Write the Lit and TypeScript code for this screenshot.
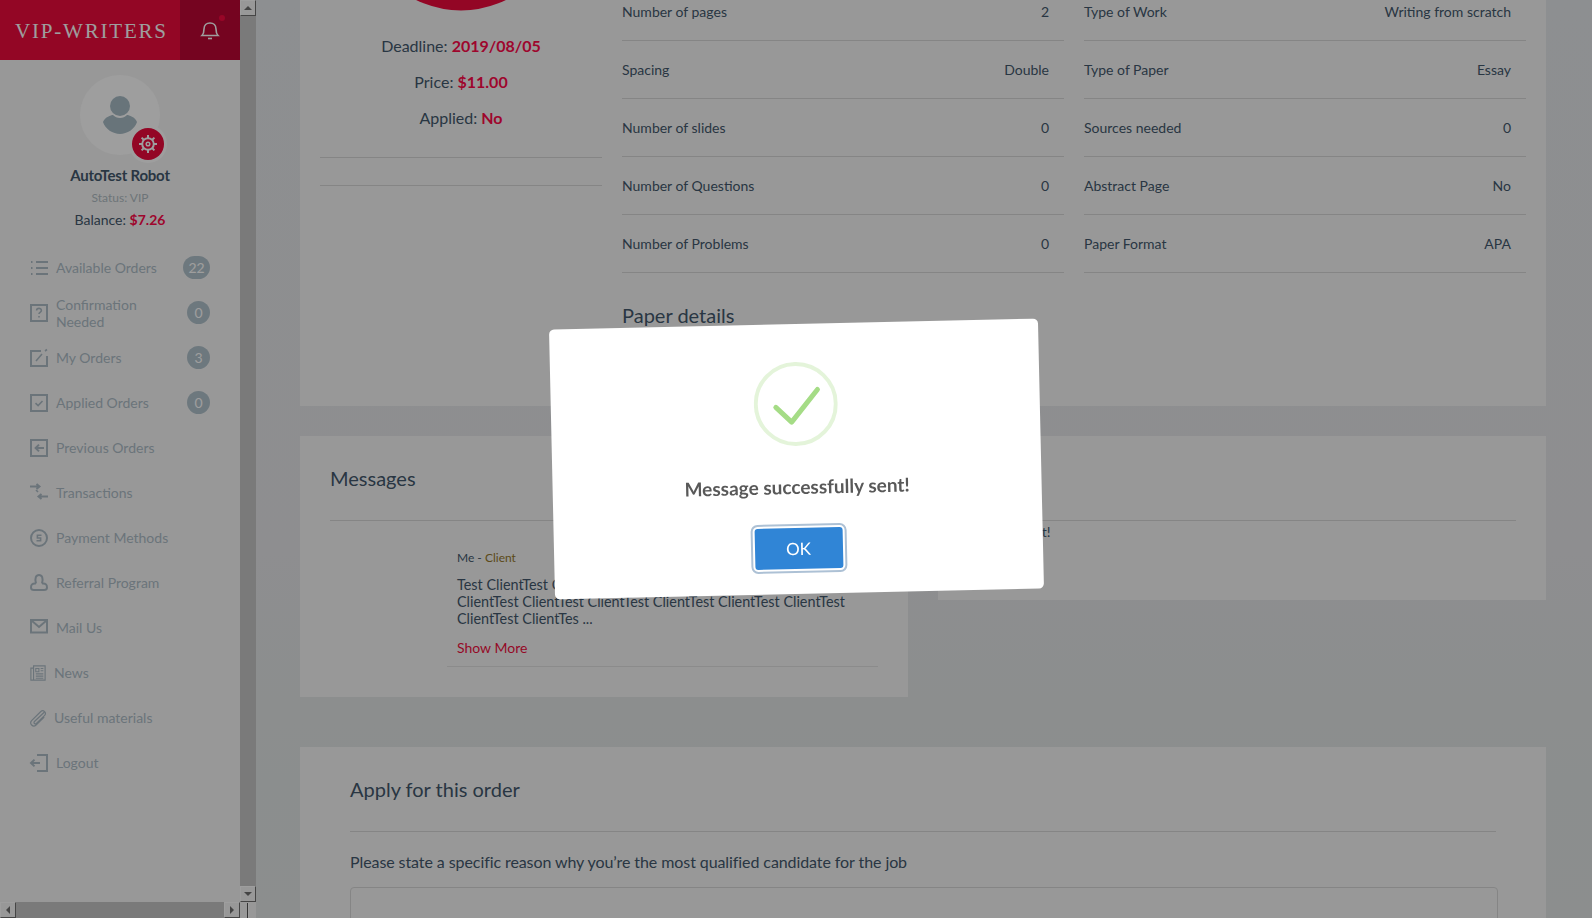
import { LitElement, html, css, svg } from "lit";
import { customElement } from "lit/decorators.js";

const icons: Record<string, unknown> = {
  list: svg`<path d="M6 3h12M6 9h12M6 15h12"/><path d="M1 3h1.500M1 9h1.500M1 15h1.500"/>`,
  question: svg`<rect x="1" y="1" width="16" height="16"/><path d="M6.600 6.600c0-3 4.800-3 4.800 0 0 1.800-2.400 1.800-2.400 3.400M9 12v1.600" stroke-width="1.600"/>`,
  edit: svg`<path d="M11 2H1v15h16V7"/><path d="M6 12l6-7M15 2l2-1.500" stroke-width="1.600"/>`,
  check: svg`<rect x="1" y="1" width="16" height="16"/><path d="M5.500 9.200l2.600 2.400 4.400-4.600" stroke-width="1.600"/>`,
  prev: svg`<rect x="1" y="1" width="16" height="16"/><path d="M14 9H6M9 5.600L5.600 9 9 12.400"/>`,
  swap: svg`<path d="M0 2.500h9M6.500 0l3 2.500-3 2.500"/><path d="M18 12.500H9M11.500 10l-3 2.500 3 2.500"/><path d="M6 6l2 2" stroke-width="1.600"/>`,
  dollar: svg`<circle cx="9" cy="9" r="8"/><path d="M11.500 6.200H7.400v2.800h3.200v2.800H6.500" stroke-width="1.600"/>`,
  referral: svg`<path d="M6 9.500C4.500 4 6 1 9 1s4.500 3 3 8.500"/><path d="M6 9.500C2 9 1 11 1 13.500 1 15.500 2 16 4 16h10c2 0 3-.5 3-2.500 0-2.500-1-4.500-5-4"/>`,
  mail: svg`<rect x="1" y="1" width="16" height="12.500"/><path d="M1.500 1.500L9 8l7.500-6.500"/>`,
  news: svg`<path d="M4 1h13v16H4zM4 3.500H1V17h3" stroke-width="1.300"/><path d="M6.500 4h3.500v3.500H6.500zM12 4h3M12 6.500h3M6.500 10h8.500M6.500 12.500h8.500M6.500 15h8.500" stroke-width="1.200"/>`,
  clip: svg`<path d="M16 2.500L5 13c-1.500 1.500 .8 3.500 2.200 2L16.500 6c2.800-2.800-1.500-7-4.300-4.300L1.800 12c-3.300 3.500 1.700 8 5 4.800L16 8" stroke-width="1.400"/>`,
  logout: svg`<path d="M7 1h10v16H7"/><path d="M10 9H1M4.500 5.600L1 9l3.500 3.400"/>`,
};

const navItems = [
  { label: "Available Orders", icon: "list", badge: "22" },
  { label: "Confirmation Needed", icon: "question", badge: "0" },
  { label: "My Orders", icon: "edit", badge: "3" },
  { label: "Applied Orders", icon: "check", badge: "0" },
  { label: "Previous Orders", icon: "prev" },
  { label: "Transactions", icon: "swap" },
  { label: "Payment Methods", icon: "dollar" },
  { label: "Referral Program", icon: "referral" },
  { label: "Mail Us", icon: "mail" },
  { label: "News", icon: "news", small: true },
  { label: "Useful materials", icon: "clip", small: true },
  { label: "Logout", icon: "logout" },
];

const detailsLeft = [
  ["Number of pages", "2"],
  ["Spacing", "Double"],
  ["Number of slides", "0"],
  ["Number of Questions", "0"],
  ["Number of Problems", "0"],
];

const detailsRight = [
  ["Type of Work", "Writing from scratch"],
  ["Type of Paper", "Essay"],
  ["Sources needed", "0"],
  ["Abstract Page", "No"],
  ["Paper Format", "APA"],
];

@customElement("app-root")
export class AppRoot extends LitElement {
  static styles = css`
    :host {
      display: block;
      height: 918px;
      overflow: hidden;
      font-family: Lato, "Liberation Sans", sans-serif;
      font-size: 14px;
      color: #43586c;
    }
    .app {
      display: grid;
      grid-template-columns: 240px 16px 1fr;
      height: 918px;
      background: linear-gradient(180deg, #e4e7ea 0%, #e5e6e8 60%, #e1e5e5 85%, #e2e6e6 100%);
    }

    /* サイドバー */
    .sidebar {
      display: flex;
      flex-direction: column;
      background: #f6f6f6;
      min-height: 0;
    }
    .brand {
      display: flex;
      height: 60px;
      background: #ed0a3d;
      flex: none;
    }
    .logo {
      flex: 1;
      padding-left: 15px;
      line-height: 62px;
      font-family: "Liberation Serif", serif;
      font-size: 21px;
      letter-spacing: 1.8px;
      color: #fff;
      white-space: nowrap;
      overflow: hidden;
    }
    .bell {
      position: relative;
      width: 60px;
      background: #bd0834;
      display: flex;
      align-items: center;
      justify-content: center;
      color: #fff;
    }
    .bell svg {
      fill: none;
      stroke: currentColor;
      stroke-width: 1.600;
    }
    .bell i {
      position: absolute;
      top: 15px;
      right: 15px;
      width: 6px;
      height: 6px;
      border-radius: 50%;
      background: #f50a40;
    }
    .profile {
      display: flex;
      flex-direction: column;
      align-items: center;
      flex: none;
      padding-top: 15px;
      height: 185px;
      box-sizing: border-box;
      text-align: center;
    }
    .avatar {
      position: relative;
      width: 80px;
      height: 80px;
      border-radius: 50%;
      background: #ffffff;
    }
    .avatar > svg {
      display: block;
      fill: #a8bcc6;
    }
    .gear {
      position: absolute;
      right: -4px;
      bottom: -5px;
      width: 32px;
      height: 32px;
      border-radius: 50%;
      background: #ed0a3d;
      box-shadow: 0 0 0 3px #fff;
      display: flex;
      align-items: center;
      justify-content: center;
    }
    .name {
      margin-top: 11px;
      font-size: 15px;
      line-height: 18px;
      font-weight: 700;
      letter-spacing: -0.2px;
    }
    .status {
      margin-top: 6px;
      font-size: 12px;
      line-height: 15px;
      color: #b0bcc3;
    }
    .balance {
      margin-top: 6px;
      font-size: 14px;
      line-height: 18px;
    }
    .balance b,
    .meta b {
      color: #ff0a4a;
      font-weight: 700;
    }
    .nav {
      flex: 1;
      padding: 0 30px;
    }
    .nav-item {
      display: flex;
      align-items: center;
      height: 45px;
      color: #adbcc6;
      line-height: 17px;
    }
    .nav-item svg {
      flex: none;
      width: 18px;
      height: 18px;
      margin-right: 8px;
      fill: none;
      stroke: currentColor;
      stroke-width: 2;
      overflow: visible;
    }
    .nav-item.small svg {
      width: 16px;
      height: 16px;
    }
    .nav-item span {
      flex: 1;
      padding-right: 8px;
    }
    .badge {
      flex: none;
      min-width: 23px;
      height: 23px;
      padding: 0 2px;
      box-sizing: border-box;
      border-radius: 12px;
      background: #b1c2cb;
      color: #fff;
      font-size: 14px;
      line-height: 23px;
      text-align: center;
    }
    .badge.wide {
      min-width: 27px;
    }

    /* スクロールバー */
    .hbar,
    .vbar {
      display: flex;
      background: #c5c5c5;
    }
    .hbar {
      height: 16px;
      justify-content: space-between;
      flex: none;
    }
    .vbar {
      flex-direction: column;
      justify-content: space-between;
    }
    .arrow {
      width: 16px;
      height: 16px;
      box-sizing: border-box;
      background: #f6f6f6;
      border: 1px solid;
      border-color: #fff #707070 #707070 #fff;
      display: flex;
      align-items: center;
      justify-content: center;
      flex: none;
    }
    .arrow::after {
      content: "";
      border: 4px solid transparent;
    }
    .arrow.up::after {
      border-bottom-color: #707070;
      margin-bottom: 4px;
    }
    .arrow.down::after {
      border-top-color: #707070;
      margin-top: 4px;
    }
    .arrow.left::after {
      border-right-color: #707070;
      margin-right: 4px;
    }
    .arrow.right::after {
      border-left-color: #707070;
      margin-left: 4px;
    }
    .vbar-end {
      display: flex;
      flex-direction: column;
    }
    .corner {
      height: 16px;
      background: #f6f6f6;
      position: relative;
    }
    .corner::after {
      content: "";
      position: absolute;
      top: 1px;
      bottom: 0;
      left: 7px;
      width: 1px;
      background: #555;
      box-shadow: 1px 0 0 #fff;
    }

    /* メイン */
    .main {
      min-width: 0;
      padding: 0 46px 0 44px;
      overflow: hidden;
    }
    .scrolled {
      margin-top: -17px;
    }
    .card {
      background: #f6f6f6;
      box-sizing: border-box;
    }
    .order {
      display: grid;
      grid-template-columns: 282px 1fr;
      gap: 20px;
      height: 423px;
      padding: 0 20px;
    }
    .ring {
      height: 28px;
      overflow: hidden;
      display: flex;
      align-items: flex-end;
      justify-content: center;
    }
    .ring svg {
      flex: none;
      fill: none;
      stroke: #ed0a3d;
      stroke-width: 11;
    }
    .meta {
      text-align: center;
      font-size: 16px;
      line-height: 36px;
      padding-top: 17px;
    }
    .meta p {
      margin: 0;
    }
    .meta .rule {
      height: 28px;
      box-sizing: border-box;
      border-top: 1px solid #d7d7d7;
    }
    .meta .rule:first-of-type {
      margin-top: 21px;
    }
    .tables {
      display: grid;
      grid-template-columns: 1fr 1fr;
      gap: 0 20px;
      align-content: start;
    }
    .row {
      display: flex;
      justify-content: space-between;
      height: 58px;
      box-sizing: border-box;
      padding-right: 15px;
      line-height: 58px;
      border-bottom: 1px solid #d7d7d7;
      white-space: nowrap;
    }
    h3 {
      margin: 0;
      font-size: 20px;
      font-weight: 400;
      line-height: 24px;
    }
    .details-title {
      grid-column: 1 / -1;
      margin-top: 30px;
    }
    .split {
      display: grid;
      grid-template-columns: 608px 608px;
      gap: 30px;
      align-items: start;
      margin: 30px 0 50px;
    }
    .messages {
      height: 261px;
      padding: 30px 30px 0;
      overflow: hidden;
    }
    .messages h3 {
      height: 54px;
      border-bottom: 1px solid #d7d7d7;
    }
    .message {
      margin: 29px 0 0 127px;
      width: 420px;
    }
    .from {
      font-size: 12px;
      line-height: 15px;
    }
    .from em {
      font-style: normal;
      color: #94762a;
    }
    .body {
      margin: 11px 0 0;
      font-size: 14.400px;
      line-height: 17px;
      width: 400px;
    }
    .more {
      display: block;
      margin-top: 12px;
      line-height: 17px;
      color: #f0103f;
    }
    .message-end {
      margin: 10px 0 0 -10px;
      width: 431px;
      border-top: 1px solid #e0e0e0;
    }
    .aside {
      height: 164px;
      padding: 84px 30px 0;
    }
    .aside p {
      margin: 0;
      padding-top: 2px;
      border-top: 1px solid #d7d7d7;
      line-height: 17px;
    }
    .apply {
      height: 300px;
      padding: 30px 48px 0 50px;
    }
    .apply h3 {
      height: 54px;
      margin-right: 2px;
      border-bottom: 1px solid #d7d7d7;
    }
    .apply label {
      display: block;
      margin-top: 19px;
      font-size: 16px;
      line-height: 22px;
      letter-spacing: -0.085px;
    }
    .field {
      height: 120px;
      margin-top: 14px;
      border: 1px solid #d7d7d7;
      border-radius: 4px;
    }

    /* モーダル */
    .overlay {
      position: fixed;
      inset: 0;
      background: rgba(0, 0, 0, 0.38);
      display: flex;
      align-items: center;
      justify-content: center;
    }
    .modal {
      width: 489px;
      height: 270px;
      box-sizing: border-box;
      padding-top: 38px;
      background: #fff;
      border-radius: 5px;
      transform: rotate(-1.290deg);
      display: flex;
      flex-direction: column;
      align-items: center;
    }
    .modal svg {
      display: block;
      fill: none;
    }
    .modal-title {
      margin: 28px 0 0;
      font-size: 19px;
      line-height: 26px;
      font-weight: 700;
      color: #595959;
    }
    .ok {
      margin-top: 28px;
      width: 88px;
      height: 41px;
      border: 0;
      border-radius: 3px;
      background: #3085d6;
      color: #fff;
      font: 400 17px Lato, "Liberation Sans", sans-serif;
      box-shadow: 0 0 0 2px #fff, 0 0 0 4px rgba(50, 100, 150, 0.4);
    }
  `;

  private renderNav() {
    return navItems.map(
      (item) => html`
        <div class="nav-item ${item.small ? "small" : ""}">
          <svg viewBox="0 0 18 18">${icons[item.icon]}</svg>
          <span>${item.label}</span>
          ${item.badge
            ? html`<div class="badge ${item.badge.length > 1 ? "wide" : ""}">${item.badge}</div>`
            : null}
        </div>
      `
    );
  }

  private renderRows(rows: string[][]) {
    return html`<div>
      ${rows.map(([label, value]) => html`<div class="row"><span>${label}</span><span>${value}</span></div>`)}
    </div>`;
  }

  render() {
    return html`
      <div class="app">
        <aside class="sidebar">
          <div class="brand">
            <div class="logo">VIP-WRITERS</div>
            <div class="bell">
              <svg width="20" height="20" viewBox="0 0 20 20">
                <path d="M2 15.500c1.500-1.500 2-3 2-6.500 0-3.500 2.500-6 6-6s6 2.500 6 6c0 3.500.5 5 2 6.500z" />
                <path d="M8 18.500h4" />
              </svg>
              <i></i>
            </div>
          </div>
          <div class="profile">
            <div class="avatar">
              <svg width="80" height="80" viewBox="0 0 80 80">
                <circle cx="40" cy="31" r="10" />
                <path d="M23 47c2-5 8-7 10-7 2 2 4 3 7 3s5-1 7-3c2 0 8 2 10 7-2 7-10 12-17 12s-15-5-17-12z" />
              </svg>
              <div class="gear">
                <svg width="20" height="20" viewBox="0 0 20 20" fill="none" stroke="#fff">
                  <circle cx="10" cy="10" r="5.800" stroke-width="2" />
                  <circle cx="10" cy="10" r="1.800" stroke-width="1.500" />
                  <path
                    d="M10 1v3M10 16v3M1 10h3M16 10h3M3.600 3.600l2.100 2.100M14.300 14.300l2.100 2.100M3.600 16.400l2.100-2.100M14.300 5.700l2.100-2.100"
                    stroke-width="2"
                  />
                </svg>
              </div>
            </div>
            <div class="name">AutoTest Robot</div>
            <div class="status">Status: VIP</div>
            <div class="balance">Balance: <b>$7.26</b></div>
          </div>
          <nav class="nav">${this.renderNav()}</nav>
          <div class="hbar">
            <div class="arrow left"></div>
            <div class="arrow right"></div>
          </div>
        </aside>
        <div class="vbar">
          <div class="arrow up"></div>
          <div class="vbar-end">
            <div class="arrow down"></div>
            <div class="corner"></div>
          </div>
        </div>
        <main class="main">
          <div class="scrolled">
            <section class="card order">
              <div>
                <div class="ring">
                  <svg width="204" height="204" viewBox="0 0 204 204"><circle cx="102" cy="102" r="96" /></svg>
                </div>
                <div class="meta">
                  <p>Deadline: <b>2019/08/05</b></p>
                  <p>Price: <b>$11.00</b></p>
                  <p>Applied: <b>No</b></p>
                  <div class="rule"></div>
                  <div class="rule"></div>
                </div>
              </div>
              <div class="tables">
                ${this.renderRows(detailsLeft)} ${this.renderRows(detailsRight)}
                <h3 class="details-title">Paper details</h3>
              </div>
            </section>
            <div class="split">
              <section class="card messages">
                <h3>Messages</h3>
                <div class="message">
                  <div class="from">Me - <em>Client</em></div>
                  <p class="body">
                    Test ClientTest ClientTest ClientTest ClientTest ClientTest ClientTest ClientTest ClientTest
                    ClientTest ClientTest ClientTest ClientTest ClientTes ...
                  </p>
                  <a class="more">Show More</a>
                  <div class="message-end"></div>
                </div>
              </section>
              <section class="card aside">
                <p>No notes yet!</p>
              </section>
            </div>
            <section class="card apply">
              <h3>Apply for this order</h3>
              <label>Please state a specific reason why you’re the most qualified candidate for the job</label>
              <div class="field"></div>
            </section>
          </div>
        </main>
      </div>
      <div class="overlay">
        <div class="modal">
          <svg width="84" height="84" viewBox="0 0 84 84">
            <circle cx="42" cy="42" r="40" stroke="#a5dc86" stroke-opacity="0.3" stroke-width="4" />
            <path d="M22 45l15.500 15L64 28" stroke="#a5dc86" stroke-width="5" stroke-linecap="round" stroke-linejoin="round" />
          </svg>
          <h2 class="modal-title">Message successfully sent!</h2>
          <button class="ok">OK</button>
        </div>
      </div>
    `;
  }
}
